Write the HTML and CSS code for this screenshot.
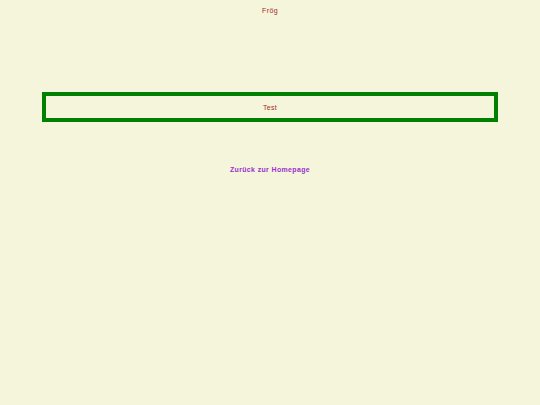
FILE: index.html
```html
<!DOCTYPE html>
<html>
<head>
<meta charset="utf-8">
<link rel="stylesheet" href="styles.css">
</head>
<body>
<div class="title">Frög</div>
<div class="box">Test</div>
<a class="back" href="#">Zurück zur Homepage</a>
</body>
</html>
```
FILE: styles.css
```css
html, body {
  margin: 0;
  padding: 0;
  background: #f5f5dc;
}
body {
  font-family: "Liberation Sans", Arial, sans-serif;
  font-size: 7px;
  letter-spacing: 0.35px;
  color: #a52a2a;
  display: flex;
  flex-direction: column;
  align-items: center;
  padding-top: 7px;
}
.title {
  line-height: 8px;
  height: 8px;
}
.box {
  margin-top: 77px;
  width: 448px;
  height: 22px;
  border: 4px solid #008000;
  display: flex;
  align-items: center;
  justify-content: center;
}
.back {
  margin-top: 44px;
  color: #9932cc;
  font-weight: bold;
  text-decoration: none;
  line-height: 8px;
}
```
